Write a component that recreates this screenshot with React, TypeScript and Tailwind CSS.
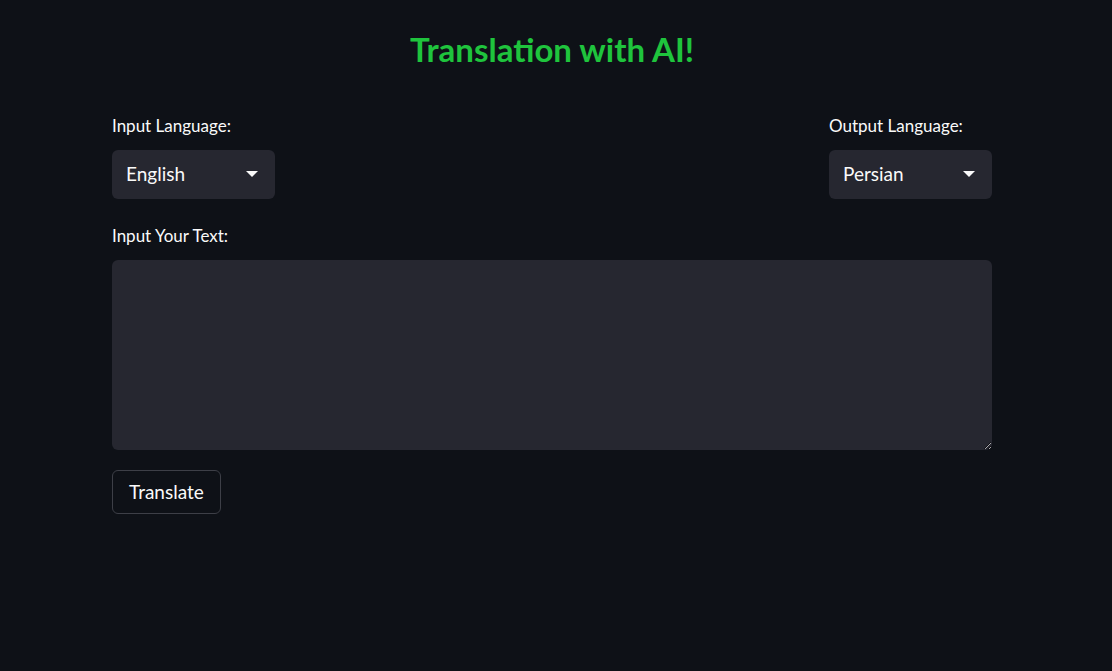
import React from "react";

const font = { fontFamily: "Lato, 'Open Sans', sans-serif" };

function Select({ label, value }: { label: string; value: string }) {
  return (
    <div className="w-[163px]">
      <div className="mb-[14px] text-[17px] leading-[21px] text-[#fafafa]">{label}</div>
      <div className="flex h-[49px] items-center justify-between rounded-md bg-[#262730] pl-[14px] pr-[17px] text-[19px] text-[#fafafa]">
        <span>{value}</span>
        <svg width="12" height="7" viewBox="0 0 12 7">
          <path d="M0 0 L12 0 L6 6 Z" fill="#fafafa" />
        </svg>
      </div>
    </div>
  );
}

function App(): JSX.Element {
  const [text, setText] = React.useState("");

  return (
    <div className="min-h-[671px] w-full bg-[#0e1117]" style={font}>
      <div className="ml-[112px] w-[880px] pt-[28px]">
        <h1 className="text-center text-[33px] font-bold leading-[42px] text-[#1fc43d]">
          Translation with AI!
        </h1>
        <div className="mt-[45px] flex justify-between">
          <Select label="Input Language:" value="English" />
          <Select label="Output Language:" value="Persian" />
        </div>
        <div className="mt-[26px] text-[17px] leading-[21px] text-[#fafafa]">Input Your Text:</div>
        <textarea
          className="mt-[14px] block h-[190px] w-full resize-y rounded-md bg-[#262730] p-4 text-[#fafafa] outline-none"
          value={text}
          onChange={(e) => setText(e.target.value)}
        />
        <button className="mt-[20px] h-[44px] rounded-md border border-[#3d3f47] bg-[#0e1117] px-[16px] text-[19px] text-[#fafafa]">
          Translate
        </button>
      </div>
    </div>
  );
}

export default App;
